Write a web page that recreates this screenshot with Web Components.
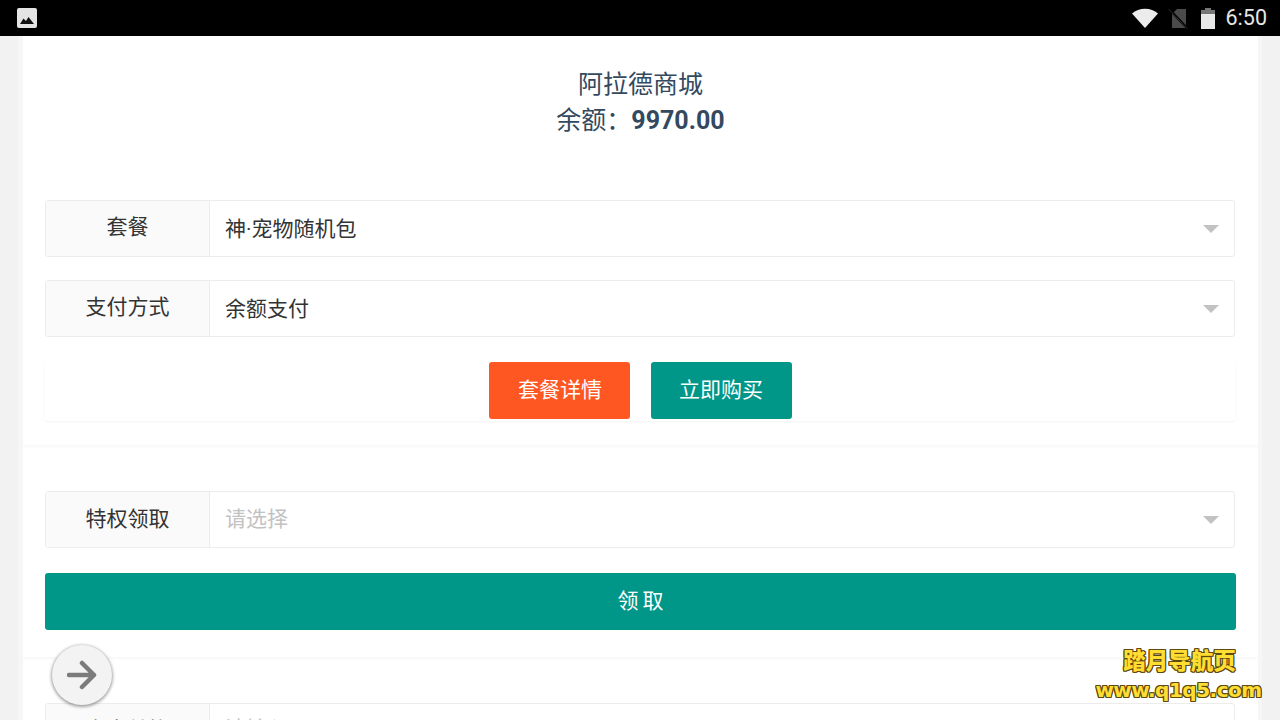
<!DOCTYPE html>
<html lang="zh"><head><meta charset="utf-8"><title>阿拉德商城</title>
<style>
html,body{margin:0;height:720px;overflow:hidden;background:#f2f2f2}
body{font-family:Roboto,"Noto Sans CJK SC",sans-serif;color:#333;display:flex;flex-direction:column;position:relative}
app-card{flex:1;min-height:0}
</style></head><body>
<status-bar></status-bar>
<app-card>
  <shop-panel style="--pad-top:31px;--pad-bottom:24px">
    <shop-head name="阿拉德商城" balance="9970.00"></shop-head>
    <select-row label="套餐" value="神·宠物随机包" label-shift="-2" style="--mt:61px"></select-row>
    <select-row label="支付方式" value="余额支付" label-shift="-2" style="--mt:23px"></select-row>
    <btn-bar>
      <app-btn color="#ff5722" style="padding-left:2px">套餐详情</app-btn>
      <app-btn color="#009688">立即购买</app-btn>
    </btn-bar>
  </shop-panel>
  <shop-panel style="--pad-top:43px;--pad-bottom:27px">
    <select-row label="特权领取" value="请选择" placeholder></select-row>
    <app-btn color="#009688" block spaced style="margin-top:25px">领取</app-btn>
  </shop-panel>
  <shop-panel style="--pad-top:43px;--pad-bottom:0px">
    <select-row label="卡密兑换" value="请输入" label-shift="-2" placeholder style="--vpad:10px"></select-row>
  </shop-panel>
</app-card>
<fab-button></fab-button>
<water-mark></water-mark>
<script>
function def(name, html, init){
  customElements.define(name, class extends HTMLElement{
    connectedCallback(){
      if(this.shadowRoot) return;
      const a=n=>this.getAttribute(n)||'';
      const r=this.attachShadow({mode:'open'});
      r.innerHTML=typeof html==='function'?html(a,this):html;
      if(init) init(r,this);
    }
  });
}
def('status-bar',`<style>
:host{display:flex;align-items:center;justify-content:space-between;height:36px;background:#000;color:#eee;flex:none;padding:0 13px 0 17px;box-sizing:border-box}
.r{display:flex;align-items:center}
svg{display:block}
.t{font:21.5px Roboto,sans-serif;margin-left:11px;color:#e6e6e6;line-height:36px}
</style>
<svg width="20" height="20" viewBox="0 0 20 20"><rect x="0" y="0" width="20" height="20" rx="2" fill="#e4e4e4"/><path d="M3 16 6.500 10.500l2.500 2.500 2.500-4 5.500 7z" fill="#111"/></svg>
<div class="r">
<svg width="26" height="20" viewBox="0 0 26 20"><path d="M0 5.500C3.500 2.500 8 .8 13 .8S22.500 2.500 26 5.500L13 20z" fill="#ececec"/></svg>
<svg style="margin-left:10px" width="20" height="21" viewBox="0 0 20 21"><path d="M4 20V6l5-5h9v19z" fill="#4a4a4a"/><path d="M1.500 1.500 19 20" stroke="#000" stroke-width="2.500"/><path d="M.5 1 19 20.500" stroke="#3a3a3a" stroke-width=".8"/></svg>
<svg style="margin-left:13px" width="14" height="21" viewBox="0 0 14 21"><path d="M4 0h6v2h4v19H0V2h4z" fill="#e8e8e8"/><path d="M4 0h6v2h4v4H0V2h4z" fill="#777"/></svg>
<span class="t">6:50</span>
</div>`);
def('app-card',`<style>
:host{display:block;box-sizing:border-box;margin-left:23px;width:1235px;background:#fff;box-shadow:-5px 0 0 #f6f6f6,4px 0 0 #f6f6f6}
</style><slot></slot>`);
def('shop-panel',`<style>
:host{display:block;padding:var(--pad-top) 22px var(--pad-bottom);margin-bottom:3px;background:#fff;box-shadow:0 2px 3px rgba(0,0,0,.035);clip-path:inset(0 0 -6px 0)}
</style><slot></slot>`);
def('shop-head',(a)=>`<style>
:host{display:block;text-align:center;font-size:25px;line-height:36px;color:#34495e}
b{font-weight:700}
</style><div>${a('name')}</div><div>余额：<b>${a('balance')}</b></div>`);
def('select-row',(a,el)=>`<style>
:host{display:flex;box-sizing:border-box;height:57px;width:1190px;margin-top:var(--mt,0);border:1px solid #ececec;border-radius:3px;background:#fff;font-size:21px}
.l{flex:none;width:164px;box-sizing:border-box;border-right:1px solid #ececec;background:#fafafa;display:flex;align-items:center;justify-content:center;color:#333;padding-bottom:${a('label-shift')?'8px':'6px'}}
.v{flex:1;display:flex;align-items:center;padding-left:15px;padding-bottom:var(--vpad,${el.hasAttribute('placeholder')?'6px':'3px'});color:${el.hasAttribute('placeholder')?'#c2c2c2':'#333'}}
.a{width:0;height:0;border:8px solid transparent;border-top:8px solid #c2c2c2;border-bottom:0;margin:0 15px 0 0}
</style><div class="l">${a('label')}</div><div class="v">${a('value')}</div><div style="display:flex;align-items:center"><i class="a"></i></div>`);
def('btn-bar',`<style>
:host{display:flex;justify-content:center;gap:21px;width:1190px;box-sizing:border-box;margin-top:23px;padding:2px 0;height:61px;border-radius:3px;background:#fff;box-shadow:0 1px 3px rgba(0,0,0,.05)}
</style><slot></slot>`);
def('app-btn',(a,el)=>`<style>
:host{display:${el.hasAttribute('block')?'flex':'inline-flex'};${el.hasAttribute('block')?'width:1191px;':'width:141px;'}height:57px;box-sizing:border-box;align-items:center;justify-content:center;border-radius:3px;background:${a('color')};color:#fff;font-size:21px;padding-bottom:${el.hasAttribute('spaced')?'5px':'6px'};${el.hasAttribute('spaced')?'letter-spacing:4px;padding-left:4px;':''}}
</style><slot></slot>`);
def('fab-button',`<style>
:host{position:absolute;left:52px;top:645px;width:60px;height:60px;border-radius:50%;background:#f3f3f3;box-shadow:0 1px 3px 1px rgba(0,0,0,.35);display:flex;align-items:center;justify-content:center}
</style><svg width="30" height="30" viewBox="0 0 30 30"><path d="M2 15h25M15 3l12 12-12 12" fill="none" stroke="#7b7b7b" stroke-width="4.500" stroke-linecap="round" stroke-linejoin="round"/></svg>`);
def('water-mark',`<style>
:host{position:absolute;right:19px;top:644px;width:165px;text-align:center;color:#ffdd33;font-family:"Noto Sans CJK SC",sans-serif;font-weight:900;text-shadow:1px 0 #5c4a10,-1px 0 #5c4a10,0 1px #5c4a10,0 -1px #5c4a10,1px 1px #5c4a10,-1px -1px #5c4a10,1px -1px #5c4a10,-1px 1px #5c4a10}
div{white-space:nowrap}
.a{font-size:22.500px;line-height:31px;padding-left:2px}
.b{font:700 20px/30px "DejaVu Sans",sans-serif;letter-spacing:-.5px;text-align:center;margin:0 -5px}
</style><div class="a">踏月导航页</div><div class="b">www.q1q5.com</div>`);
</script>
</body></html>
